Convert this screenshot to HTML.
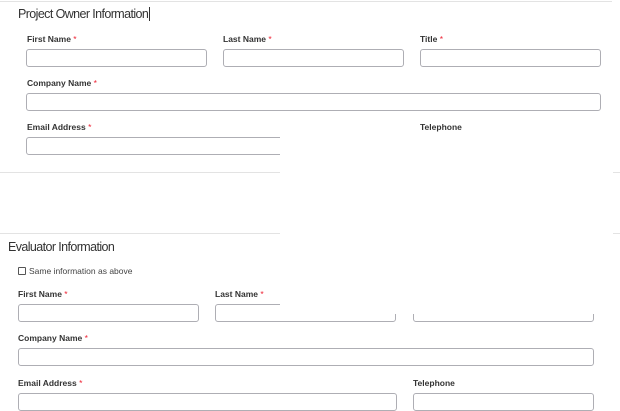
<!DOCTYPE html>
<html><head><meta charset="utf-8"><style>
*{margin:0;padding:0;box-sizing:border-box}
body{width:620px;height:411px;overflow:hidden;background:#fff;font-family:"Liberation Sans",Arial,sans-serif;position:relative;color:#333}
.a{position:absolute}
.t{font-size:12.5px;color:#333;letter-spacing:-0.6px}
.l{font-size:8.5px;font-weight:bold;color:#333}
.l b{color:#e23;font-weight:normal}
.i{position:absolute;border:1px solid #aeaeb4;border-radius:3px;height:18px;background:#fff}
.hr{position:absolute;height:1px;background:#e3e3e3}
</style></head><body>
<div class="hr" style="left:0;top:1px;width:612px"></div>
<div class="a t" style="left:18px;top:7px">Project Owner Information<span style="border-left:1px solid #333;margin-left:1px"></span></div>
<div class="a l" style="left:27px;top:34px">First Name <b>*</b></div>
<div class="a l" style="left:223px;top:34px">Last Name <b>*</b></div>
<div class="a l" style="left:420px;top:34px">Title <b>*</b></div>
<div class="i" style="left:26px;top:49px;width:181px"></div>
<div class="i" style="left:223px;top:49px;width:181px"></div>
<div class="i" style="left:420px;top:49px;width:181px"></div>
<div class="a l" style="left:27px;top:78px">Company Name <b>*</b></div>
<div class="i" style="left:26px;top:93px;width:575px"></div>
<div class="a l" style="left:27px;top:122px">Email Address <b>*</b></div>
<div class="a l" style="left:420px;top:122px">Telephone</div>
<div class="i" style="left:26px;top:137px;width:378px"></div>
<div class="hr" style="left:0;top:172px;width:620px"></div>
<div class="hr" style="left:0;top:233px;width:620px"></div>
<div class="a t" style="left:8px;top:240px">Evaluator Information</div>
<div class="a" style="left:18px;top:267px;width:8px;height:8px;border:1px solid #555;border-radius:1px"></div>
<div class="a" style="left:29px;top:266px;font-size:8.5px;color:#444">Same information as above</div>
<div class="a l" style="left:18px;top:289px">First Name <b>*</b></div>
<div class="a l" style="left:215px;top:289px">Last Name <b>*</b></div>
<div class="i" style="left:18px;top:304px;width:181px"></div>
<div class="i" style="left:215px;top:304px;width:181px"></div>
<div class="i" style="left:413px;top:304px;width:181px"></div>
<div class="a l" style="left:18px;top:333px">Company Name <b>*</b></div>
<div class="i" style="left:18px;top:348px;width:576px"></div>
<div class="a l" style="left:18px;top:378px">Email Address <b>*</b></div>
<div class="a l" style="left:413px;top:378px">Telephone</div>
<div class="i" style="left:18px;top:393px;width:379px"></div>
<div class="i" style="left:413px;top:393px;width:181px"></div>
<div class="a" style="left:280px;top:134px;width:333px;height:180px;background:#fff"></div>
</body></html>
